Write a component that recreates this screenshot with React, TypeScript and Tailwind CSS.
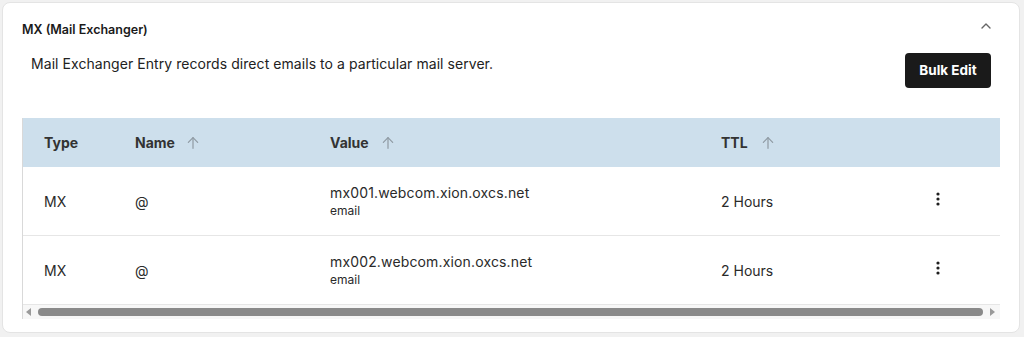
import React from "react";

const ArrowUp = () => (
  <svg width="16" height="16" viewBox="0 0 24 24" fill="none" stroke="#8f9aa3" strokeWidth="1.8" strokeLinecap="round" strokeLinejoin="round">
    <path d="M12 20V4" />
    <path d="M5 11l7-7 7 7" />
  </svg>
);

const Kebab = () => (
  <svg width="4" height="14" viewBox="0 0 4 14" fill="#1f1f1f">
    <circle cx="2" cy="2" r="1.6" />
    <circle cx="2" cy="7" r="1.6" />
    <circle cx="2" cy="12" r="1.6" />
  </svg>
);

const rows = [
  { type: "MX", name: "@", value: "mx001.webcom.xion.oxcs.net", sub: "email", ttl: "2 Hours" },
  { type: "MX", name: "@", value: "mx002.webcom.xion.oxcs.net", sub: "email", ttl: "2 Hours" },
];

export default function App() {
  return (
    <div className="w-[1024px] h-[337px] bg-[#f1f1f1] pt-[2px] pl-[2px] pr-[4px] pb-[4px]" style={{ fontFamily: "Inter, 'Liberation Sans', Arial, sans-serif" }}>
      <div className="h-[331px] bg-white rounded-[8px] border border-[#e4e4e4] px-[19px] pt-[17px]">
        <div className="flex items-center justify-between h-[20px]">
          <div className="text-[12.5px] font-semibold text-[#1a1a1a]">
            MX (Mail Exchanger)
          </div>
          <svg className="mr-[8px] -mt-[8px]" width="12" height="8" viewBox="0 0 12 8" fill="none" stroke="#666" strokeWidth="1.4" strokeLinecap="round" strokeLinejoin="round">
            <path d="M2 6l4-4 4 4" />
          </svg>
        </div>
        <div className="flex items-start justify-between mt-[13px]">
          <div className="ml-[9px] mt-[1px] text-[14px] tracking-[0.06px] leading-[20px] text-[#222]">
            Mail Exchanger Entry records direct emails to a particular mail server.
          </div>
          <button className="mr-[9px] w-[86px] h-[35px] rounded-[4px] bg-[#1a1a1a] text-white text-[13.5px] font-bold">
            Bulk Edit
          </button>
        </div>
        <div className="mt-[30px] border-l border-[#d9d9d9] overflow-hidden">
          <div className="flex items-center h-[49px] bg-[#cddfec] text-[14px] font-bold text-[#333]">
            <div className="w-[112px] pl-[21px]">Type</div>
            <div className="w-[195px] flex items-center gap-[10px]">Name <ArrowUp /></div>
            <div className="w-[391px] flex items-center gap-[11px]">Value <ArrowUp /></div>
            <div className="flex items-center gap-[12px]">TTL <ArrowUp /></div>
          </div>
          {rows.map((r, i) => (
            <div key={i} className="flex items-center h-[69px] border-b border-[#e6e6e6] text-[14px] text-[#2a2a2a]">
              <div className="w-[112px] pl-[21px]">{r.type}</div>
              <div className="w-[195px]">{r.name}</div>
              <div className="w-[391px] flex flex-col -mt-[1px]">
                <span className="leading-[20px] tracking-[0.15px]">{r.value}</span>
                <span className="text-[12px] leading-[16px]">{r.sub}</span>
              </div>
              <div className="w-[215px]">{r.ttl}</div>
              <div className="-mt-[5px]"><Kebab /></div>
            </div>
          ))}
          <div className="flex items-center h-[14px] bg-[#f7f7f7] pl-[3px] pr-[5px]">
            <svg width="6" height="8" viewBox="0 0 6 8" fill="#9a9a9a"><path d="M5 0v8L0 4z" /></svg>
            <div className="flex-1 h-[8px] mx-[6px] rounded-full bg-[#8a8a8a]" />
            <svg width="6" height="8" viewBox="0 0 6 8" fill="#9a9a9a"><path d="M1 0v8l5-4z" /></svg>
          </div>
        </div>
      </div>
    </div>
  );
}
